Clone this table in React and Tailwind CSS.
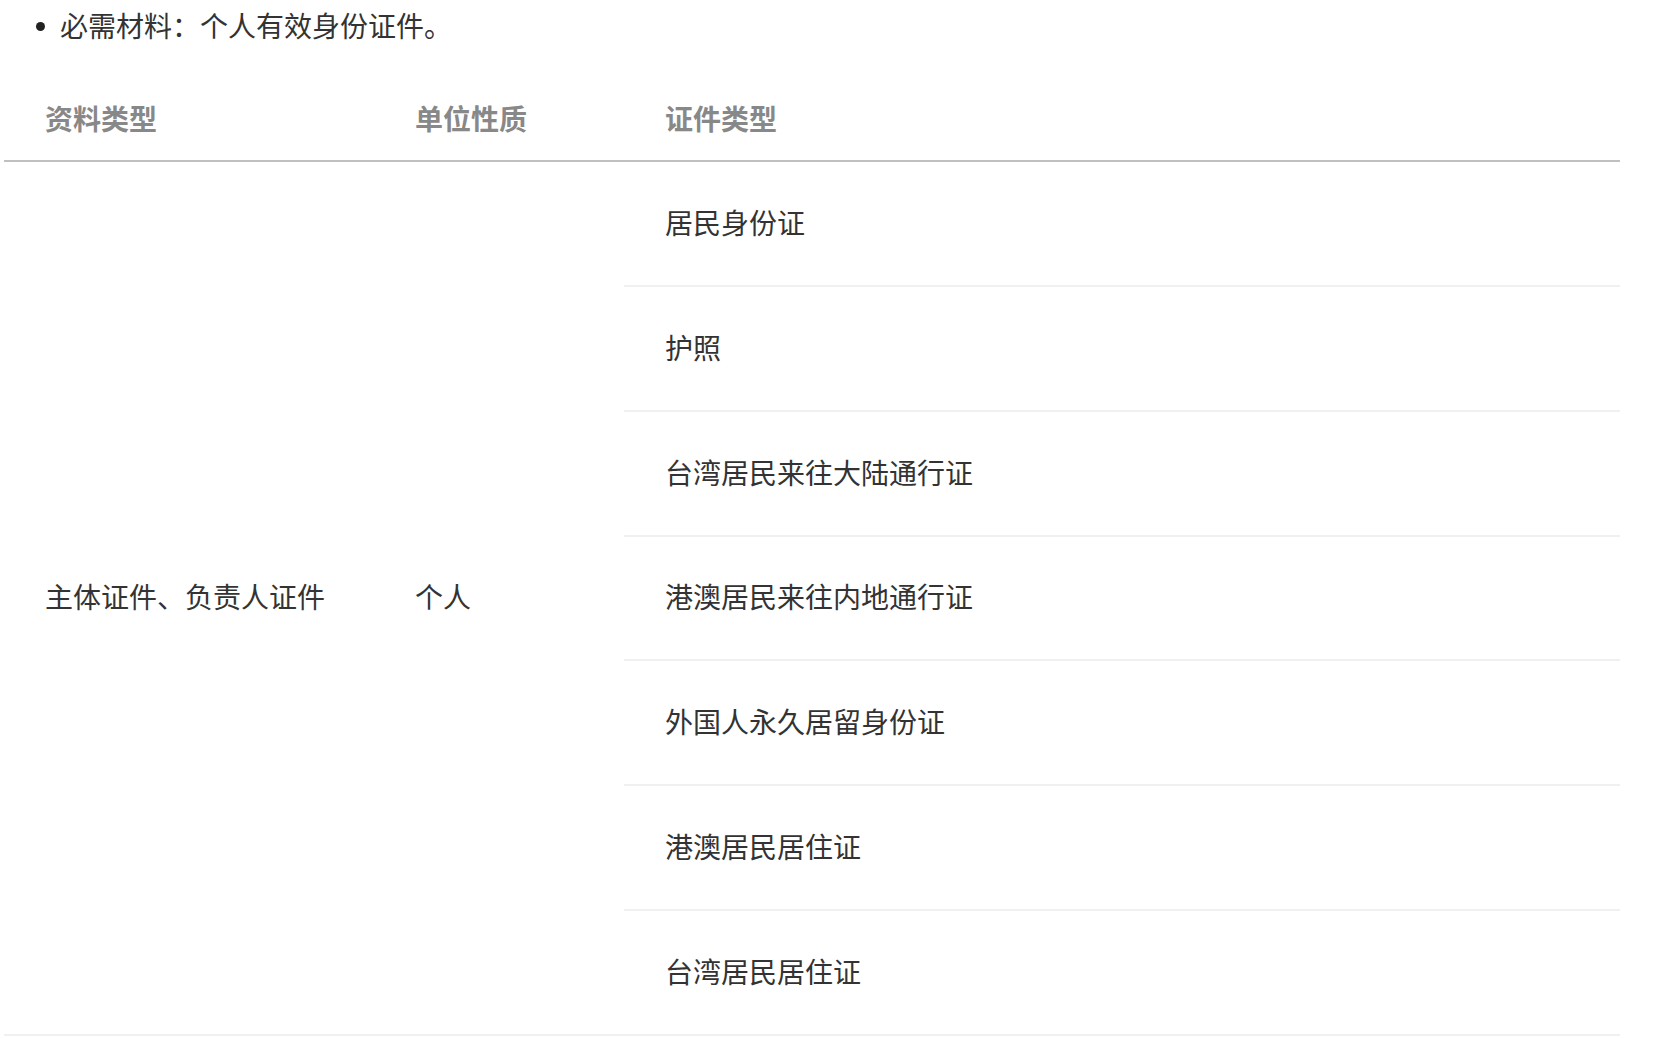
const certTypes = [
  { name: "居民身份证", h: "h-[125px]" },
  { name: "护照", h: "h-[125px]" },
  { name: "台湾居民来往大陆通行证", h: "h-[125px]" },
  { name: "港澳居民来往内地通行证", h: "h-[124px]" },
  { name: "外国人永久居留身份证", h: "h-[125px]" },
  { name: "港澳居民居住证", h: "h-[125px]" },
  { name: "台湾居民居住证", h: "h-[123px]" },
];

const font = {
  fontFamily: '"Noto Sans CJK SC", "Noto Sans", sans-serif',
};

export default function App() {
  return (
    <div className="bg-white min-h-screen pt-[5px]" style={font}>
      {/* Required materials note */}
      <div className="flex items-center h-[40px] pl-[36px] text-[28px] leading-[40px] text-[#333]">
        <span className="w-[9px] h-[9px] rounded-full bg-[#222] mr-[15px] mt-[3px]" />
        <span>必需材料：个人有效身份证件。</span>
      </div>

      {/* Table */}
      <div className="ml-[4px] w-[1616px] mt-[33px]">
        <div className="flex items-center h-[84px] pb-[3px] border-b-2 border-[#c0c0c0] text-[28px] font-bold text-[#888]">
          <div className="w-[370px] pl-[41px]">资料类型</div>
          <div className="w-[250px] pl-[41px]">单位性质</div>
          <div className="flex-1 pl-[41px]">证件类型</div>
        </div>

        <div className="flex border-b-2 border-[#f0f0f0] text-[28px] text-[#333]">
          <div className="w-[370px] pl-[41px] pb-[4px] flex items-center">主体证件、负责人证件</div>
          <div className="w-[250px] pl-[41px] pb-[4px] flex items-center">个人</div>
          <div className="flex-1 flex flex-col">
            {certTypes.map((row, i) => (
              <div
                key={row.name}
                className={`${row.h} flex items-center pl-[41px] pb-[4px] ${
                  i < certTypes.length - 1 ? "border-b-2 border-[#f0f0f0]" : ""
                }`}
              >
                {row.name}
              </div>
            ))}
          </div>
        </div>
      </div>
    </div>
  );
}
